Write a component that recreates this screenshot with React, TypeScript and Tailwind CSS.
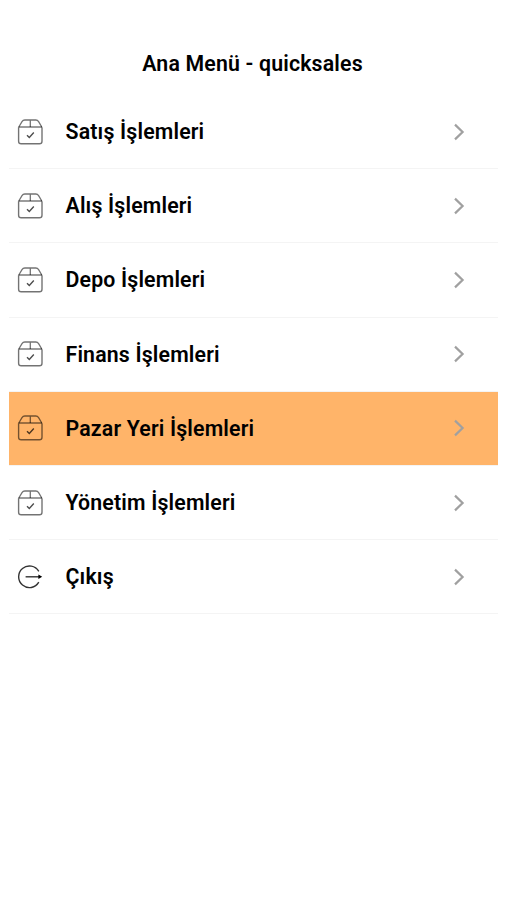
interface MenuItem {
  label: string;
  icon: 'box' | 'exit';
  active?: boolean;
}

const menuItems: MenuItem[] = [
  { label: 'Satış İşlemleri', icon: 'box' },
  { label: 'Alış İşlemleri', icon: 'box' },
  { label: 'Depo İşlemleri', icon: 'box' },
  { label: 'Finans İşlemleri', icon: 'box' },
  { label: 'Pazar Yeri İşlemleri', icon: 'box', active: true },
  { label: 'Yönetim İşlemleri', icon: 'box' },
  { label: 'Çıkış', icon: 'exit' },
];

function BoxIcon() {
  return (
    <svg viewBox="0 0 26 26" fill="none" stroke="black" className="w-[26px] h-[26px] shrink-0">
      <path d="M1.6 8.2V22.2Q1.6 24.8 4.2 24.8H22.4Q25 24.8 25 22.2V8.2" strokeOpacity="0.55" strokeWidth="1.4" />
      <path d="M1.8 8L5 2.6Q6 1 7.8 1H18.8Q20.6 1 21.6 2.6L24.8 8M13.3 1V8" strokeOpacity="0.55" strokeWidth="1.3" />
      <path d="M1.6 8H25" strokeOpacity="0.6" strokeWidth="1.3" />
      <path d="M10 16.2L12.3 18.4L16.8 13.6" strokeOpacity="0.7" strokeWidth="1.4" />
    </svg>
  );
}

function ExitIcon() {
  return (
    <svg viewBox="0 0 26 26" fill="none" stroke="black" className="w-[26px] h-[26px] shrink-0">
      <path d="M21.8 7.4A10.8 10.8 0 1 0 21.8 18.2" strokeOpacity="0.8" strokeWidth="1.4" />
      <path d="M8.6 12.8H23" strokeOpacity="0.8" strokeWidth="1.4" />
      <path d="M21.4 10.6L25.2 12.8L21.4 15Z" fill="black" stroke="none" />
    </svg>
  );
}

function Chevron() {
  return (
    <svg viewBox="0 0 12 18" fill="none" stroke="#a0a0a0" strokeWidth="2.2" className="w-3 h-[18px] shrink-0">
      <path d="M2 1.6L9.6 9L2 16.4" />
    </svg>
  );
}

export default function App() {
  return (
    <div className="min-h-screen bg-white text-black font-['Roboto',sans-serif] font-semibold tracking-[0.17px]">
      <header className="pt-[50px] pb-[18px] text-center">
        <h1 className="text-[21.3px] leading-[27px] pr-px">Ana Menü - quicksales</h1>
      </header>

      <nav className="ml-[9px] mr-2">
        {menuItems.map((item) => (
          <button
            key={item.label}
            className={`flex w-full h-[74.2px] items-center border-b border-[#f4f4f4] pl-2 pr-[33.4px] text-left ${
              item.active ? 'bg-[#ffb469]' : 'bg-white'
            }`}
          >
            {item.icon === 'box' ? <BoxIcon /> : <ExitIcon />}
            <span className="ml-[22.5px] flex-1 text-[21.3px] leading-[27px]">{item.label}</span>
            <Chevron />
          </button>
        ))}
      </nav>
    </div>
  );
}
